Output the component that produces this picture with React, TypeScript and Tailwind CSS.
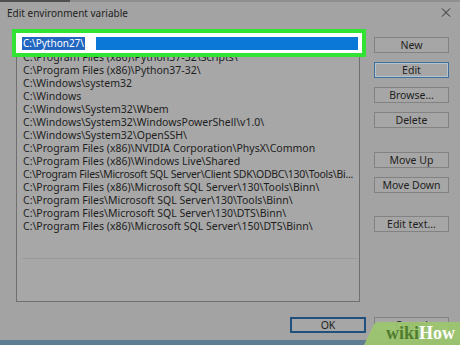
import React from "react";

const rows = [
  "C:\\Program Files (x86)\\Python37-32\\Scripts\\",
  "C:\\Program Files (x86)\\Python37-32\\",
  "C:\\Windows\\system32",
  "C:\\Windows",
  "C:\\Windows\\System32\\Wbem",
  "C:\\Windows\\System32\\WindowsPowerShell\\v1.0\\",
  "C:\\Windows\\System32\\OpenSSH\\",
  "C:\\Program Files (x86)\\NVIDIA Corporation\\PhysX\\Common",
  "C:\\Program Files (x86)\\Windows Live\\Shared",
  "C:\\Program Files\\Microsoft SQL Server\\Client SDK\\ODBC\\130\\Tools\\Bi...",
  "C:\\Program Files (x86)\\Microsoft SQL Server\\130\\Tools\\Binn\\",
  "C:\\Program Files\\Microsoft SQL Server\\130\\Tools\\Binn\\",
  "C:\\Program Files\\Microsoft SQL Server\\130\\DTS\\Binn\\",
  "C:\\Program Files (x86)\\Microsoft SQL Server\\150\\DTS\\Binn\\",
];

function Btn({ label, mt, focused }: { label: string; mt: string; focused?: boolean }) {
  return (
    <div
      className={`${mt} w-[75px] h-[16px] flex items-center justify-center text-[10.5px] leading-none border ${
        focused ? "border-[#3f6f9c] shadow-[inset_0_0_0_1px_#b5c3cf]" : "border-[#828282]"
      } bg-[#a6a6a6]`}
    >
      {label}
    </div>
  );
}

export default function App() {
  return (
    <div className="w-[460px] h-[345px] bg-[#a3a3a3] relative overflow-hidden flex flex-col font-['Noto_Sans',sans-serif] text-[#1e1e1e]">
      <div className="h-[2px] flex shrink-0">
        <div className="w-[70px] bg-[#4f4f4f]" />
        <div className="flex-1 bg-[#8f8f8f]" />
      </div>
      <div className="h-[21px] shrink-0 flex items-center justify-between pl-[7px] pr-[8px]">
        <span className="text-[10px] leading-none">Edit environment variable</span>
        <svg width="10" height="9" viewBox="0 0 10 9" className="mr-[1px]">
          <path d="M1 0.5 L9 8.5 M9 0.5 L1 8.5" stroke="#2a2a2a" strokeWidth="1" fill="none" />
        </svg>
      </div>
      <div className="flex shrink-0 pl-[16px] pt-[11px]">
        <div className="w-[344px] h-[268px] border border-[#6f6f6f] bg-[#a7a7a7] flex flex-col pt-[3px]">
          <div className="h-[13px] shrink-0" />
          {rows.map((r, i) => (
            <div
              key={r}
              className={`h-[13px] shrink-0 pl-[6px] pr-[1px] text-[10.5px] leading-[13px] whitespace-nowrap overflow-hidden ${
                i === 9 ? "tracking-[-0.28px]" : ""
              }`}
            >
              {r}
            </div>
          ))}
          <div className="mt-[25px] ml-[5px] mr-[1px] h-[1px] bg-[#999999]" />
        </div>
        <div className="ml-[14px] flex flex-col pt-[3px]">
          <Btn label="New" mt="mt-0" />
          <Btn label="Edit" mt="mt-[9px]" focused />
          <Btn label="Browse..." mt="mt-[9px]" />
          <Btn label="Delete" mt="mt-[9px]" />
          <Btn label="Move Up" mt="mt-[24px]" />
          <Btn label="Move Down" mt="mt-[9px]" />
          <Btn label="Edit text..." mt="mt-[23px]" />
        </div>
      </div>
      <div className="flex justify-end gap-[8px] pr-[11px] mt-[15px] shrink-0">
        <div className="w-[76px] h-[16px] flex items-center justify-center text-[10.5px] leading-none border-2 border-[#21507d] bg-[#a6a6a6]">
          OK
        </div>
        <div className="w-[75px] h-[16px] flex items-start justify-center pt-[2px] text-[10.5px] leading-none border border-[#828282] bg-[#a6a6a6]">
          Cancel
        </div>
      </div>
      <div className="flex-1" />
      <div className="h-[5px] shrink-0 bg-[#5f7d92]" />

      {/* green highlight annotation over the edited row */}
      <div className="absolute left-[12px] top-[29px] w-[354px] h-[28px] border-4 border-[#33e333] bg-white pl-[6px] pr-[4px] pt-[4px] pb-[3px]">
        <div className="h-full bg-[#0b77d6] flex items-center">
          <span className="h-full bg-[#2166c0] text-white text-[10px] leading-[13px] pl-[1px] pr-[1px]">C:\Python27\</span>
          <span className="h-full w-[11px] bg-white" />
        </div>
      </div>

      {/* wikiHow watermark */}
      <div className="absolute right-0 bottom-0 w-[96px] h-[23px]">
        <svg width="96" height="23" viewBox="0 0 96 23" className="absolute inset-0">
          <path d="M10 2 Q12 0 16 0 L96 0 L96 23 L0 23 Z" fill="#9cc56f" fillOpacity="0.95" />
        </svg>
        <div className="absolute left-[22px] top-[1px] text-[18px] leading-[20px] font-bold font-['Liberation_Serif',serif]">
          <span className="text-[#4f7d2e]">wiki</span>
          <span className="text-white">How</span>
        </div>
      </div>
    </div>
  );
}
